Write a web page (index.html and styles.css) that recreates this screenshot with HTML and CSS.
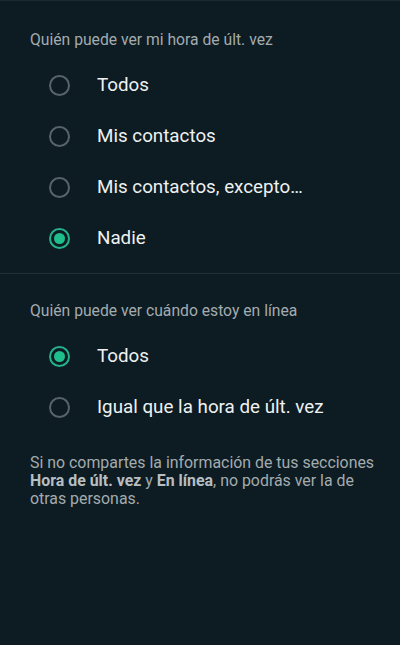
FILE: index.html
```html
<!DOCTYPE html>
<html lang="es">
<head>
    <meta charset="UTF-8">
    <meta name="viewport" content="width=device-width, initial-scale=1.0">
    <title>Privacidad - Hora de últ. vez y en línea</title>
    <link rel="stylesheet" href="styles.css">
</head>
<body>
    <div class="screen">
        <section class="group">
            <h2 class="group-title">Quién puede ver mi hora de últ. vez</h2>
            <ul class="options">
                <li class="option"><span class="radio"></span><span class="label">Todos</span></li>
                <li class="option"><span class="radio"></span><span class="label">Mis contactos</span></li>
                <li class="option"><span class="radio"></span><span class="label">Mis contactos, excepto…</span></li>
                <li class="option"><span class="radio checked"></span><span class="label">Nadie</span></li>
            </ul>
        </section>

        <hr class="divider">

        <section class="group">
            <h2 class="group-title second">Quién puede ver cuándo estoy en línea</h2>
            <ul class="options">
                <li class="option"><span class="radio checked"></span><span class="label">Todos</span></li>
                <li class="option"><span class="radio"></span><span class="label">Igual que la hora de últ. vez</span></li>
            </ul>
            <p class="note">Si no compartes la información de tus secciones <b>Hora de últ. vez</b> y <b>En línea</b>, no podrás ver la de otras personas.</p>
        </section>
    </div>
</body>
</html>
```

FILE: styles.css
```css
html, body {
    margin: 0;
    padding: 0;
    background-color: #0d1c22;
}

body {
    font-family: Roboto, "Noto Sans", sans-serif;
    height: 645px;
    overflow: hidden;
}

.screen {
    min-height: 645px;
    border-top: 1px solid #1a2a30;
    box-sizing: border-box;
}

.group {
    padding: 0 20px 0 30px;
}

.group-title {
    margin: 0;
    padding-top: 28.5px;
    font-size: 15.7px;
    line-height: 20px;
    font-weight: 400;
    color: #a3abaf;
}

.group-title.second {
    padding-top: 27px;
}

.options {
    list-style: none;
    margin: 10px 0 0;
    padding: 0;
}

.option {
    display: flex;
    align-items: center;
    height: 51px;
}

.radio {
    box-sizing: border-box;
    width: 21px;
    height: 21px;
    margin-left: 19px;
    margin-right: 27px;
    border: 2px solid #59646a;
    border-radius: 50%;
    display: flex;
    align-items: center;
    justify-content: center;
}

.radio.checked {
    border-color: #25b28a;
}

.radio.checked::after {
    content: "";
    width: 11px;
    height: 11px;
    border-radius: 50%;
    background-color: #1fbf8c;
}

.label {
    font-size: 18.8px;
    color: #eef1f2;
}

.divider {
    margin: 9px 0 0;
    border: 0;
    border-top: 1px solid #222f35;
}

.note {
    margin: 21.5px 0 0;
    font-size: 15.9px;
    line-height: 18px;
    color: #a3abaf;
}

.note b {
    font-weight: 700;
    color: #b7bec1;
}
```
